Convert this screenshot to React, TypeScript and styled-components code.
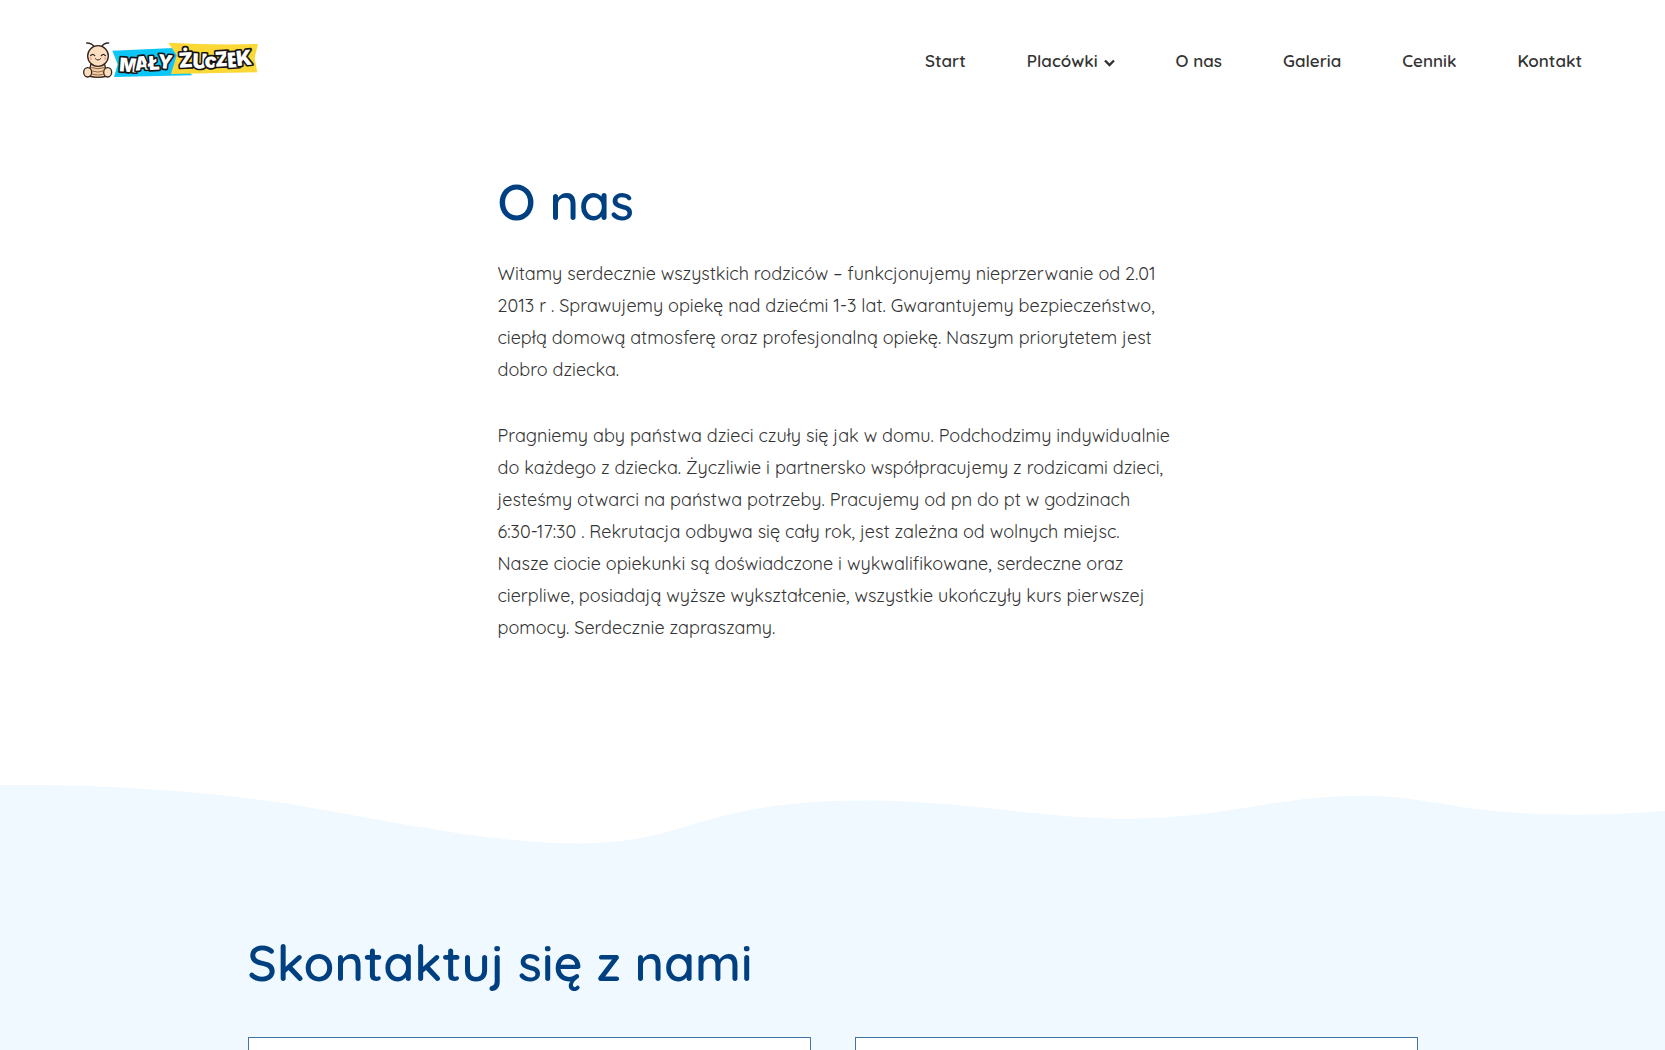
import React from "react";
import styled, { createGlobalStyle, ThemeProvider } from "styled-components";

const theme = {
  navy: "#004080",
  ink: "#333333",
  sky: "#f0f9ff",
  cardBorder: "#4474a3",
  font: '"Quicksand", "Open Sans", sans-serif',
};

const GlobalStyle = createGlobalStyle`
  *, *::before, *::after { box-sizing: border-box; }
  body {
    margin: 0;
    background: #ffffff;
    color: ${theme.ink};
    font-family: ${theme.font};
  }
`;

const Page = styled.div`
  display: flex;
  flex-direction: column;
  height: 100vh;
  overflow: hidden;
`;

const Header = styled.header`
  display: flex;
  flex: none;
  align-items: center;
  justify-content: space-between;
  height: 120px;
  padding: 0 83px 0 82px;
`;

const LogoLink = styled.a`
  display: block;
`;

const LogoSvg = styled.svg`
  display: block;
  width: 178px;
  height: 38px;
`;

const LogoWord = styled.text`
  font-family: Inter, sans-serif;
  font-weight: 900;
  fill: #ffffff;
  stroke: #151515;
  stroke-width: 10px;
  stroke-linejoin: round;
  paint-order: stroke;
`;

const NavList = styled.ul`
  display: flex;
  align-items: center;
  gap: 61px;
  margin: 0;
  padding: 2px 0 0;
  list-style: none;
`;

const NavLink = styled.a`
  color: ${({ theme }) => theme.ink};
  font: 600 17px/24px ${({ theme }) => theme.font};
  text-decoration: none;
`;

const NavButton = styled.button`
  display: flex;
  align-items: center;
  gap: 6px;
  padding: 0;
  border: 0;
  background: none;
  color: ${({ theme }) => theme.ink};
  font: 600 17px/24px ${({ theme }) => theme.font};
  cursor: pointer;
`;

const Chevron = styled.svg`
  width: 11px;
  height: 8px;
  margin-top: 4px;
`;

const Main = styled.main`
  flex: none;
  width: 100%;
  max-width: 678px;
  margin: 0 auto;
  padding: 52px 0 141px 4px;
`;

const Title = styled.h1`
  margin: 0 0 26px;
  color: ${({ theme }) => theme.navy};
  font: 600 50px/60px ${({ theme }) => theme.font};
`;

const Paragraph = styled.p`
  margin: 0 0 34px;
  font-size: 18px;
  font-weight: 400;
  line-height: 32px;

  &:last-child {
    margin-bottom: 0;
  }
`;

const Wave = styled.svg`
  display: block;
  flex: none;
  width: 100%;
  height: 60px;
`;

const Contact = styled.section`
  flex: 1 0 auto;
  padding: 88px 24px 80px;
  background: ${({ theme }) => theme.sky};
`;

const ContactInner = styled.div`
  max-width: 1170px;
  margin: 0 auto;
`;

const ContactTitle = styled(Title).attrs({ as: "h2" })`
  margin-bottom: 44px;
`;

const CardGrid = styled.div`
  display: grid;
  grid-template-columns: repeat(2, 1fr);
  gap: 44px;
`;

const Card = styled.article`
  min-height: 240px;
  border: 1px solid ${({ theme }) => theme.cardBorder};
  background: #ffffff;
`;

function Logo() {
  return (
    <LogoSvg viewBox="36 33 534 114" role="img" aria-label="Mały Żuczek">
      <path d="M127 62 L310 54 L366 136 L132 141 L143 103 Z" fill="#0cc6f7" />
      <path d="M295 38 Q430 46 564 42 L554 84 L562 127 L303 132 L320 76 Z" fill="#fcd836" />
      <g fill="none" stroke="#33251f" strokeWidth="4" strokeLinecap="round" strokeLinejoin="round">
        <path d="M74 52 Q67 39 50 39" />
        <path d="M94 52 Q99 39 116 39" />
        <path d="M62 104 Q83 96 104 104 L112 138 Q84 146 56 138 Z" fill="#f3cda4" />
        <ellipse cx="53" cy="127" rx="12" ry="14" fill="#fddfc0" />
        <ellipse cx="113" cy="127" rx="12" ry="14" fill="#fddfc0" />
        <circle cx="84" cy="78" r="31" fill="#fddfc0" />
        <path d="M62 77 Q68 69 74 77" />
        <path d="M94 77 Q100 69 106 77" />
        <path d="M76 86 Q84 95 92 86" strokeWidth="3" />
        <path d="M65 113 Q84 120 103 113 M66 123 Q84 130 101 123 M68 133 Q84 138 100 133" stroke="#8e684c" strokeWidth="3" />
      </g>
      <g fill="#f8a99a">
        <circle cx="62" cy="86" r="4" />
        <circle cx="106" cy="86" r="4" />
      </g>
      <LogoWord fontSize="57" x="147 196 235 262" y="124 122 121 113" rotate="4 -6 -4 6">
        MAŁY
      </LogoWord>
      <LogoWord fontSize="62" x="327 367 405 436 473 501" y="113 115 115 110 113 108" rotate="-3 2 -4 -3 -4 -6">
        ŻUcZEK
      </LogoWord>
    </LogoSvg>
  );
}

const links = ["O nas", "Galeria", "Cennik", "Kontakt"];

export default function App() {
  return (
    <ThemeProvider theme={theme}>
      <GlobalStyle />
      <Page>
        <Header>
          <LogoLink href="#start">
            <Logo />
          </LogoLink>
          <nav aria-label="Menu">
            <NavList>
              <li>
                <NavLink href="#start">Start</NavLink>
              </li>
              <li>
                <NavButton type="button" aria-haspopup="true">
                  Placówki
                  <Chevron viewBox="0 0 11 8" aria-hidden="true">
                    <path d="M1 1.5 L5.5 6 L10 1.5" fill="none" stroke="currentColor" strokeWidth="2.4" />
                  </Chevron>
                </NavButton>
              </li>
              {links.map((label) => (
                <li key={label}>
                  <NavLink href={`#${label.toLowerCase().replace(" ", "-")}`}>{label}</NavLink>
                </li>
              ))}
            </NavList>
          </nav>
        </Header>

        <Main id="o-nas">
          <Title>O nas</Title>
          <Paragraph>
            Witamy serdecznie wszystkich rodziców – funkcjonujemy nieprzerwanie od 2.01 2013 r . Sprawujemy
            opiekę nad dziećmi 1-3 lat. Gwarantujemy bezpieczeństwo, ciepłą domową atmosferę oraz
            profesjonalną opiekę. Naszym priorytetem jest dobro dziecka.
          </Paragraph>
          <Paragraph>
            Pragniemy aby państwa dzieci czuły się jak w domu. Podchodzimy indywidualnie do każdego z
            dziecka. Życzliwie i partnersko współpracujemy z rodzicami dzieci, jesteśmy otwarci na państwa
            potrzeby. Pracujemy od pn do pt w godzinach 6:30-17:30 . Rekrutacja odbywa się cały rok, jest
            zależna od wolnych miejsc. Nasze ciocie opiekunki są doświadczone i wykwalifikowane, serdeczne
            oraz cierpliwe, posiadają wyższe wykształcenie, wszystkie ukończyły kurs pierwszej pomocy.
            Serdecznie zapraszamy.
          </Paragraph>
        </Main>

        <Wave viewBox="0 0 1665 60" preserveAspectRatio="none" aria-hidden="true">
          <path
            fill={theme.sky}
            d="M0 0 C60 -1 180 2 290 19 C390 36 490 58.5 579 58.5 C690 58.5 700 15.5 865 15.5 C965 15.5 1040 33.7 1125 33.7 C1225 33.7 1275 10.7 1363 10.7 C1430 10.7 1460 29.7 1575 29.7 C1610 29.7 1640 28 1665 26 V60 H0 Z"
          />
        </Wave>
        <Contact id="kontakt">
          <ContactInner>
            <ContactTitle>Skontaktuj się z nami</ContactTitle>
            <CardGrid>
              <Card />
              <Card />
            </CardGrid>
          </ContactInner>
        </Contact>
      </Page>
    </ThemeProvider>
  );
}
